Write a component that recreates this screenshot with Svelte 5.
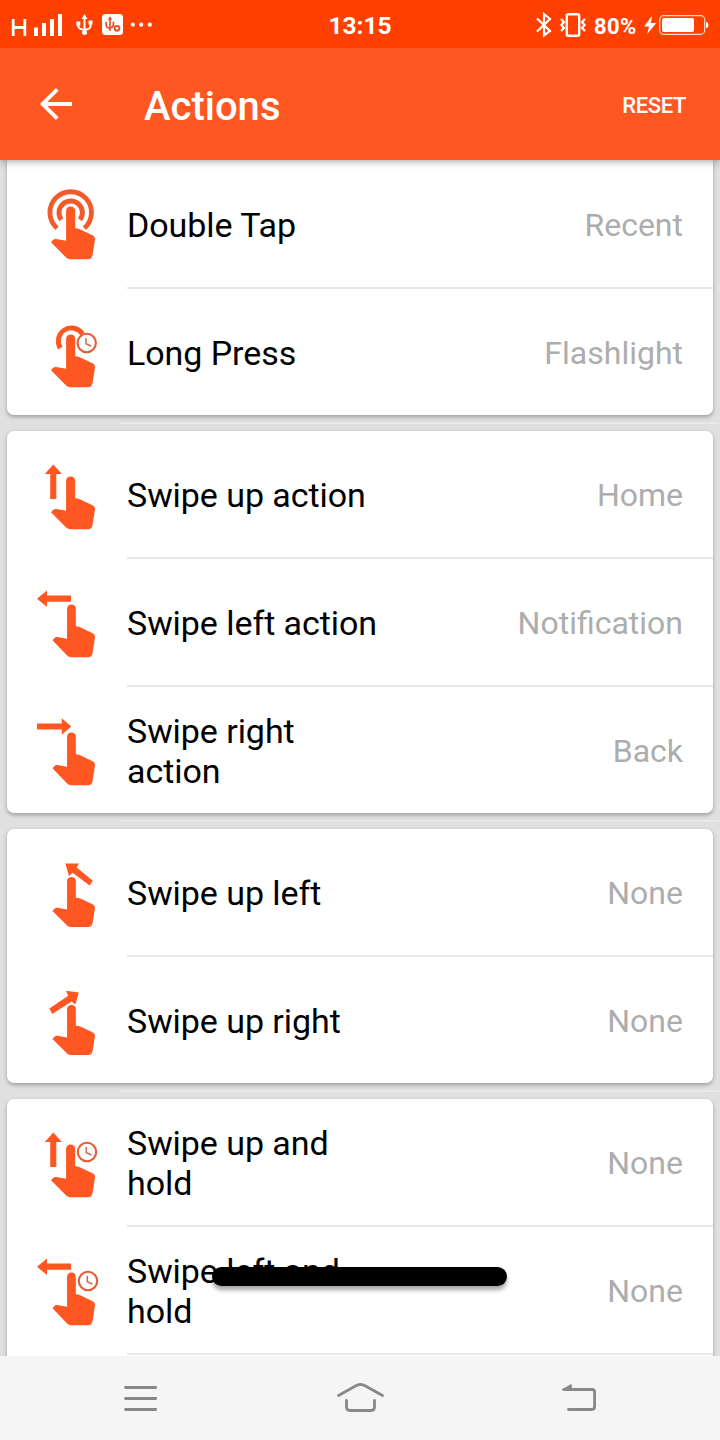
<script>
    const groups = [
        [
            { icon: 'double', title: 'Double Tap', value: 'Recent' },
            { icon: 'long', title: 'Long Press', value: 'Flashlight', clock: [86.7, 54] }
        ],
        [
            { icon: 'up', title: 'Swipe up action', value: 'Home' },
            { icon: 'left', title: 'Swipe left action', value: 'Notification' },
            { icon: 'right', title: 'Swipe right action', value: 'Back' }
        ],
        [
            { icon: 'upleft', title: 'Swipe up left', value: 'None' },
            { icon: 'upright', title: 'Swipe up right', value: 'None' }
        ],
        [
            { icon: 'up', title: 'Swipe up and hold', value: 'None', clock: [87, 53] },
            { icon: 'left', title: 'Swipe left and hold', value: 'None', clock: [88, 54] }
        ]
    ];

    const arrows = {
        up: 'M53.3 33.4 61.8 43H56.3V68H50.2V43H44.8Z',
        left: 'M37 39.7 47 31.5V36.6H71V42.8H47V48Z',
        right: 'M71.3 39.5 61.8 31.3V36.4H37V42.6H61.8V47.8Z',
        upleft: 'M65.4 34.6 79 34.4 76.7 38.5 92.8 51.8 89.6 56.4 72.6 43.8 69 47.3Z',
        upright: 'M78.8 35.4 66 33.8 68.2 38.8 49.4 51.5 52.2 57 71.6 44.4 75.4 47.5Z'
    };

    // the hand sits slightly differently under the sideways arrows
    const hands = {
        left: 'translate(3.2 0) scale(.966 1)',
        right: 'translate(3.2 0) scale(.966 1)',
        upleft: 'translate(3.2 5) scale(.966 .947)',
        upright: 'translate(3.2 5) scale(.966 .947)'
    };
</script>

<div class="screen">
    <div class="status">
        <svg width="160" height="48" viewBox="0 0 160 48" fill="#fff">
            <path d="M13.2 18V35M24.8 18V35M13.2 26.5H24.8" stroke="#fff" stroke-width="2.8" />
            <path d="M34 26.5h4v8.5h-4zM42 22h4v13h-4zM50 18h4v17h-4zM58 13h4v22h-4z" />
            <g fill="none" stroke="#fff" stroke-width="2">
                <path d="M84.5 17V31M78.3 23V25Q78.5 28.3 84.5 28.8Q90.5 28.3 90.5 25V21" />
            </g>
            <path d="M84.5 13l3 5h-6zM76.3 20.5h4v4h-4zM88.5 19.5h4v4h-4z" />
            <circle cx="84.5" cy="31.5" r="2.5" />
            <rect x="102" y="13" width="21" height="21" rx="3.5" />
            <g fill="none" stroke="#e8522b" stroke-width="1.7">
                <path d="M110 18V30M106.2 21V24.3Q106.5 27 110 27Q113.4 26.5 113.4 23.5V20.5" />
                <circle cx="117" cy="27.3" r="2.4" stroke-width="2" />
            </g>
            <path d="M110 15.2l2.3 3.5h-4.6z" fill="#e8522b" />
            <circle cx="132.8" cy="23.7" r="2.1" />
            <circle cx="141.2" cy="23.7" r="2.1" />
            <circle cx="149.8" cy="23.7" r="2.1" />
        </svg>
        <span class="time">13:15</span>
        <div class="status-right">
            <svg width="54" height="48" viewBox="534 0 54 48" fill="none" stroke="#fff" stroke-width="2.2">
                <path d="M537 17.5 550 30 544 34.5V13L550 18 537 30.5" />
                <rect x="566.8" y="13.2" width="12.4" height="21.6" rx="1.5" stroke-width="2.4" />
                <path d="M561 18l3 3-2.6 3 2.6 3-3 3M585 18l-3 3 2.6 3-2.6 3 3 3" />
            </svg>
            <span class="percent">80%</span>
            <svg width="68" height="48" viewBox="642 0 68 48">
                <path d="M652.3 14.5 644 25.5H649L647.3 33 656.3 22H650.8Z" fill="#fff" />
                <rect x="659.7" y="14.7" width="45" height="18.6" rx="4" fill="none" stroke="#fff" stroke-opacity=".8" stroke-width="1.2" />
                <rect x="662" y="17" width="32" height="14" rx="2" fill="#fff" />
                <path d="M706 21q2.4 0 2.4 3t-2.4 3z" fill="#fff" />
            </svg>
        </div>
    </div>

    <header>
        <svg class="back" width="34" height="34" viewBox="39 87 34 34" fill="none" stroke="#fff" stroke-width="3.8">
            <path d="M72 104H43M57.3 89.3 42.6 104 57.3 118.7" />
        </svg>
        <h1>Actions</h1>
        <span class="reset">RESET</span>
    </header>

    <main>
        {#each groups as group}
            <section class="card">
                {#each group as row}
                    <div class="row">
                        <svg class="icon" width="120" height="126" viewBox="7 0 120 126" fill="#ff5722">
                            {#if row.icon == 'double'}
                                <g fill="none" stroke="#f25a2a">
                                    <path d="M57 67.2A20.8 20.8 0 1 1 84.4 67.2" stroke-width="4.8" />
                                    <path d="M61.4 58.8A11.7 11.7 0 1 1 80 58.8" stroke-width="4.9" />
                                </g>
                            {:else if row.icon == 'long'}
                                <path d="M60.4 59.1A12.6 12.6 0 1 1 82.5 45" fill="none" stroke="#ff5722" stroke-width="4.9" />
                            {:else}
                                <path d={arrows[row.icon]} />
                            {/if}
                            <path
                                transform={hands[row.icon]}
                                d="M66.1 49.4a4.6 4.6 0 0 1 9.1 0V67.2q2.6 0 4.6 1L93 74.4q2.2 1.2 2 4L92.5 94q-.7 4.2-4.5 4.2H70q-2 0-3.6-1.4L51 81.3 53 79q1.2-1.2 3-1L66.1 79.8Z"
                            />
                            {#if row.clock}
                                <g transform="translate({row.clock[0]} {row.clock[1]})" stroke="#e45c34">
                                    <circle r="9.2" fill="#fff" stroke-width="2.1" />
                                    <path d="M-.7 -5V.7L4.5 3" fill="none" stroke="#cf6a50" stroke-width="1.5" />
                                </g>
                            {/if}
                        </svg>
                        <p class="title">{row.title}</p>
                        <p class="value">{row.value}</p>
                    </div>
                {/each}
            </section>
        {/each}
        <div class="pill"></div>
    </main>

    <nav>
        <svg width="720" height="84" viewBox="0 1356 720 84" fill="none" stroke="#888" stroke-width="2.8" stroke-linecap="round" stroke-linejoin="round">
            <path d="M125.5 1387.5H155.7M125.5 1398.5H155.7M125.5 1409.5H155.7" />
            <path d="M338.5 1395.5 355.5 1386Q360.5 1383 365.5 1386L382.5 1395.5M346.5 1400.5V1407Q346.5 1410.5 350 1410.5H371Q374.5 1410.5 374.5 1407V1400.5" />
            <path d="M564 1389.5H592Q594.6 1389.5 594.6 1392V1406.5Q594.6 1409.5 592 1409.5H568.5" />
            <path d="M563 1389.8 571 1385V1389.8Z" fill="#888" stroke-width="1.6" />
        </svg>
    </nav>
</div>

<style>
    :global(body) {
        background-color: #e0e0e0;
    }

    .screen {
        width: 720px;
        height: 1440px;
        display: flex;
        flex-direction: column;
        overflow: hidden;
        font-family: Roboto, sans-serif;
        background-color: #e0e0e0;
    }

    .status {
        flex: none;
        display: grid;
        grid-template-columns: 1fr auto 1fr;
        align-items: center;
        height: 48px;
        background-color: #ff4000;
        color: #fff;
        position: relative;
        z-index: 3;
    }

    .status svg {
        display: block;
    }

    .time {
        font-size: 24.5px;
        font-weight: 700;
        line-height: 48px;
        padding-top: 2px;
    }

    .status-right {
        display: flex;
        justify-content: flex-end;
        align-items: center;
        padding-right: 10px;
    }

    .percent {
        width: 48px;
        margin-left: 6px;
        padding-top: 2px;
        font-size: 22px;
        font-weight: 700;
        letter-spacing: .4px;
    }

    header {
        flex: none;
        display: flex;
        align-items: center;
        height: 112px;
        padding: 0 34px 0 39px;
        box-sizing: border-box;
        background-color: #ff5722;
        color: #fff;
        box-shadow: 0 1px 8px rgba(0, 0, 0, .4);
        position: relative;
        z-index: 2;
    }

    h1 {
        margin: 4px 0 0 71px;
        font-size: 40px;
        font-weight: 500;
    }

    .reset {
        margin-left: auto;
        padding-top: 2px;
        font-size: 22px;
        font-weight: 500;
        letter-spacing: -.4px;
    }

    main {
        flex: 1;
        min-height: 0;
        overflow: hidden;
        position: relative;
        padding: 1px 7px 0;
    }

    .card {
        position: relative;
        margin-bottom: 16px;
        background-color: #fff;
        border-radius: 7px;
        box-shadow: 0 2px 4px rgba(0, 0, 0, .3);
    }

    .card:first-child {
        margin-top: -1px;
        padding-top: 1px;
        border-radius: 0 0 7px 7px;
    }

    .card:nth-child(4) {
        padding-bottom: 20px;
    }

    /* faint list divider showing in the gap under each card */
    .card::after {
        content: '';
        position: absolute;
        left: 113px;
        right: -7px;
        bottom: -9px;
        height: 2px;
        background-color: #e8e8e8;
    }

    .row {
        display: flex;
        align-items: center;
        height: 126px;
        padding-right: 30px;
    }

    .row + .row,
    .card:nth-child(4) .row:last-child {
        position: relative;
        margin-top: 2px;
    }

    .row + .row::before,
    .card:nth-child(4) .row:last-child::after {
        content: '';
        position: absolute;
        left: 120px;
        right: 0;
        top: -2px;
        height: 2px;
        background-color: #e8e8e8;
    }

    .card:nth-child(4) .row:last-child::after {
        top: 126px;
    }

    .icon {
        flex: none;
    }

    .title {
        width: 254px;
        margin: 2px 0 0;
        font-size: 34px;
        line-height: 40px;
        letter-spacing: -.06px;
        color: #000;
    }

    .value {
        margin: 1px 0 0 auto;
        font-size: 32px;
        color: #adadad;
    }

    /* gesture bar floating over the list */
    .pill {
        position: absolute;
        left: 212px;
        bottom: 70px;
        width: 295px;
        height: 19px;
        border-radius: 10px;
        background-color: #000;
        box-shadow: 0 4px 4px rgba(0, 0, 0, .35);
    }

    nav {
        flex: none;
        height: 84px;
        background-color: #f5f5f5;
    }

    nav svg {
        display: block;
    }
</style>
